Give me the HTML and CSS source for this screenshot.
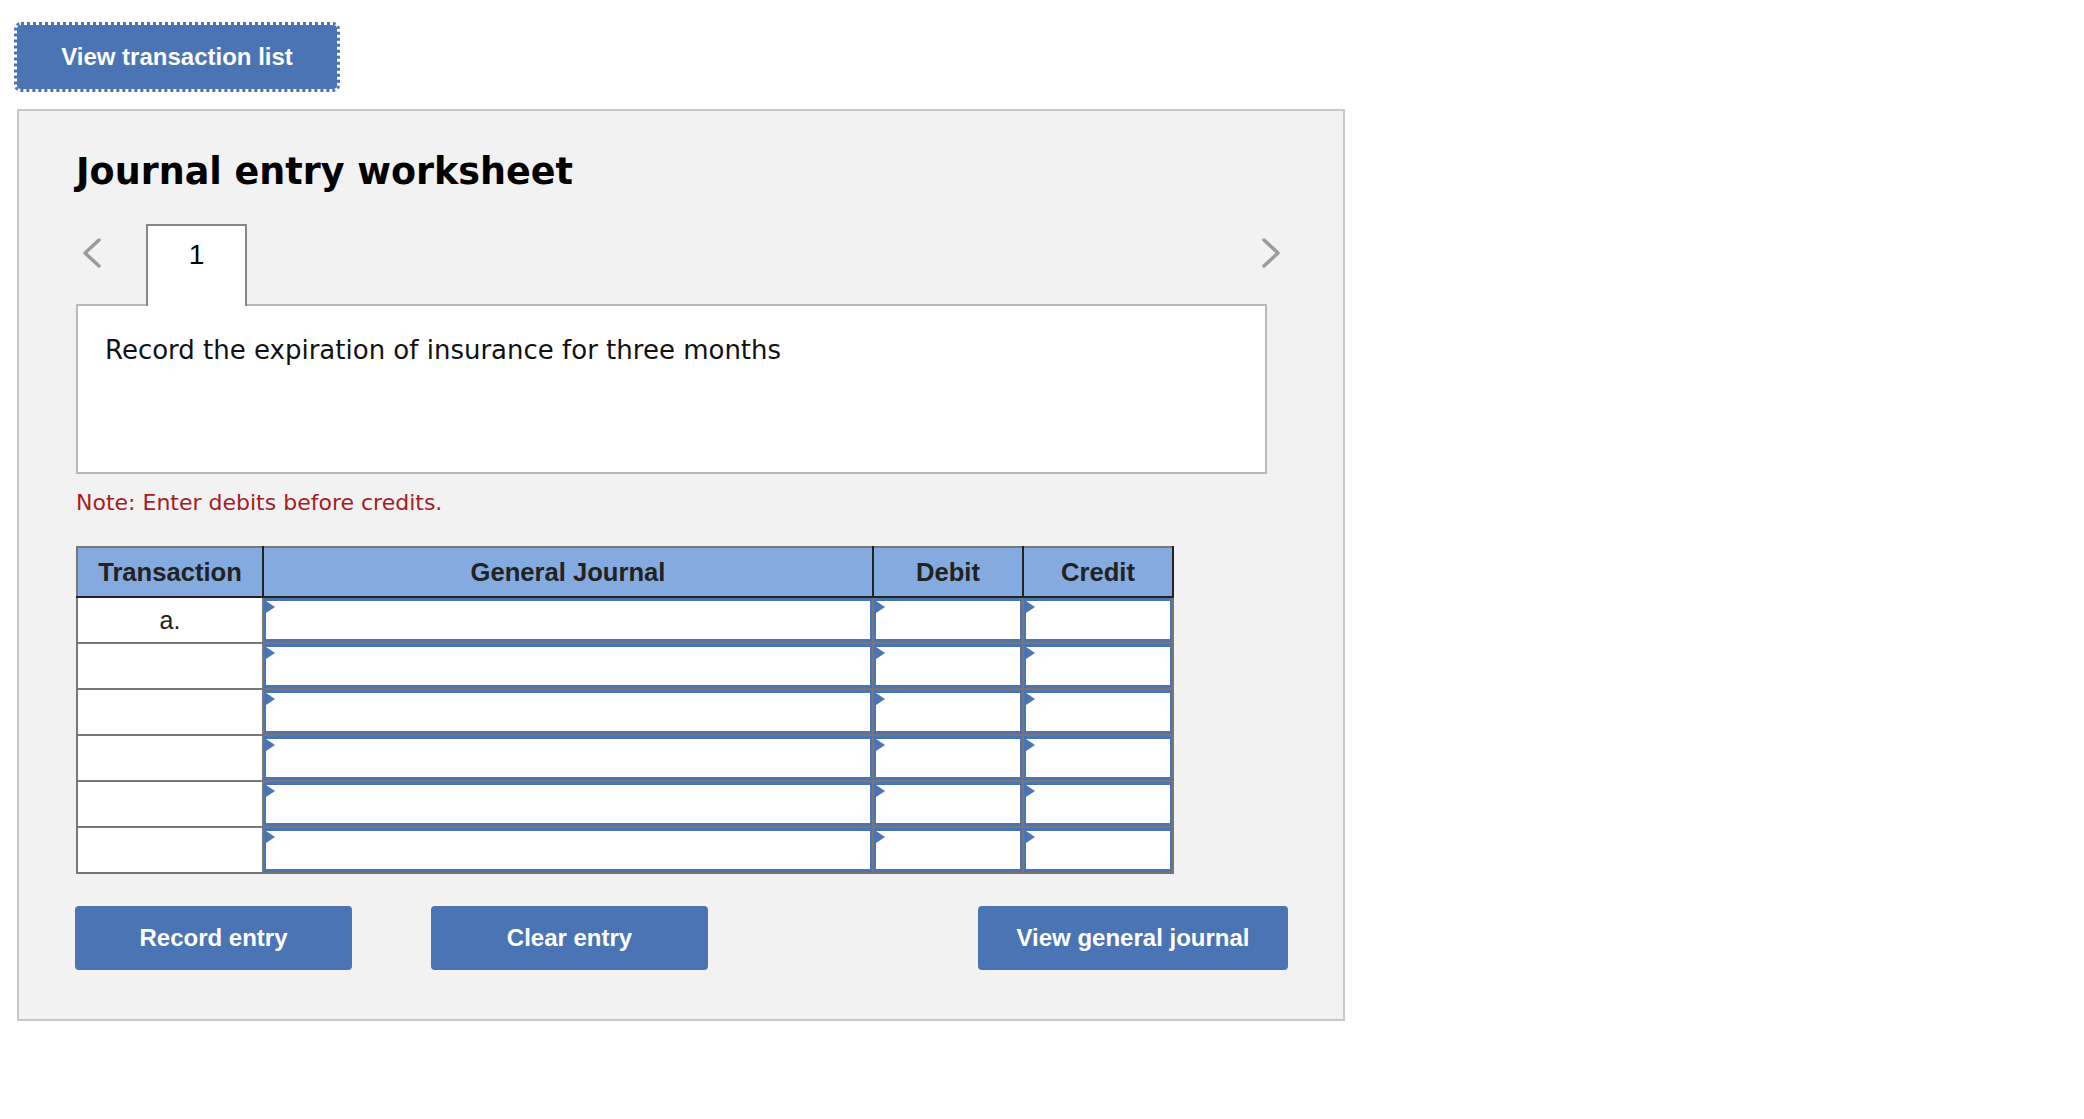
FILE: index.html
```html
<!DOCTYPE html>
<html lang="en">
<head>
    <meta charset="UTF-8">
    <meta name="viewport" content="width=device-width, initial-scale=1.0">
    <title>Journal entry worksheet</title>
    <link rel="stylesheet" href="styles.css">
</head>
<body>

<div class="page">
    <button class="btn btn-list">View transaction list</button>

    <div class="panel">
        <h1 class="title">Journal entry worksheet</h1>

        <div class="tabs">
            <span class="arrow arrow-left">
                <svg width="20" height="32" viewBox="0 0 20 32"><polyline points="17,3 3,16 17,29" /></svg>
            </span>
            <div class="tab">1</div>
            <span class="arrow arrow-right">
                <svg width="20" height="32" viewBox="0 0 20 32"><polyline points="3,3 17,16 3,29" /></svg>
            </span>
        </div>

        <div class="question">Record the expiration of insurance for three months</div>

        <p class="note">Note: Enter debits before credits.</p>

        <table class="journal">
            <colgroup>
                <col class="col-trans">
                <col class="col-account">
                <col class="col-amount">
                <col class="col-amount">
            </colgroup>
            <thead>
                <tr>
                    <th>Transaction</th>
                    <th>General Journal</th>
                    <th>Debit</th>
                    <th>Credit</th>
                </tr>
            </thead>
            <tbody>
                <tr>
                    <td class="trans">a.</td>
                    <td><div class="entry"></div></td>
                    <td><div class="entry"></div></td>
                    <td><div class="entry"></div></td>
                </tr>
                <tr>
                    <td class="trans"></td>
                    <td><div class="entry"></div></td>
                    <td><div class="entry"></div></td>
                    <td><div class="entry"></div></td>
                </tr>
                <tr>
                    <td class="trans"></td>
                    <td><div class="entry"></div></td>
                    <td><div class="entry"></div></td>
                    <td><div class="entry"></div></td>
                </tr>
                <tr>
                    <td class="trans"></td>
                    <td><div class="entry"></div></td>
                    <td><div class="entry"></div></td>
                    <td><div class="entry"></div></td>
                </tr>
                <tr>
                    <td class="trans"></td>
                    <td><div class="entry"></div></td>
                    <td><div class="entry"></div></td>
                    <td><div class="entry"></div></td>
                </tr>
                <tr>
                    <td class="trans"></td>
                    <td><div class="entry"></div></td>
                    <td><div class="entry"></div></td>
                    <td><div class="entry"></div></td>
                </tr>
            </tbody>
        </table>

        <div class="actions">
            <button class="btn btn-record">Record entry</button>
            <button class="btn btn-clear">Clear entry</button>
            <button class="btn btn-general">View general journal</button>
        </div>
    </div>
</div>

</body>
</html>
```

FILE: styles.css
```css
/* Journal worksheet */
body {
    margin: 0;
    background-color: #fff;
    font-family: "DejaVu Sans", Verdana, sans-serif;
    color: #000;
}
.page {
    padding: 25px 0 0 17px;
}
.btn {
    display: block;
    height: 64px;
    padding: 0;
    background-color: #4a74b3;
    color: #fff;
    border: none;
    border-radius: 4px;
    font-family: "Liberation Sans", Arial, sans-serif;
    font-size: 24px;
    font-weight: bold;
    cursor: pointer;
}
.btn-list {
    width: 320px;
    outline: 3px dotted #4a74b3;
}
.panel {
    box-sizing: border-box;
    width: 1328px;
    margin-top: 20px;
    padding: 40px 0 49px 57px;
    background-color: #f2f2f2;
    border: 2px solid #c8c8c8;
}
.title {
    margin: 0;
    font-size: 36.5px;
    line-height: 42px;
    font-weight: bold;
}
.tabs {
    display: flex;
    align-items: flex-start;
    width: 1205px;
    margin-top: 31px;
}
.arrow {
    display: block;
    margin-top: 13px;
}
.arrow svg {
    display: block;
}
.arrow polyline {
    fill: none;
    stroke: #9b9b9b;
    stroke-width: 3.5;
    stroke-linecap: round;
    stroke-linejoin: round;
}
.arrow-left {
    margin-left: 6px;
}
.arrow-right {
    margin-left: auto;
}
.tab {
    position: relative;
    z-index: 1;
    box-sizing: border-box;
    width: 101px;
    height: 82px;
    margin: 0 0 -2px 44px;
    padding-top: 13px;
    background-color: #fff;
    border: 2px solid #868686;
    border-bottom: none;
    text-align: center;
    font-family: "Liberation Sans", Arial, sans-serif;
    font-size: 28px;
    line-height: 32px;
}
.question {
    box-sizing: border-box;
    width: 1191px;
    height: 170px;
    padding: 29px 27px 0;
    background-color: #fff;
    border: 2px solid #b9b9b9;
    font-size: 26px;
    line-height: 30px;
    color: #111;
}
.note {
    margin: 16px 0 0;
    font-size: 22px;
    line-height: 26px;
    color: #a3201e;
}
.journal {
    margin-top: 30px;
    border-collapse: collapse;
    table-layout: fixed;
    width: 1096px;
    border: 2px solid #777;
    font-family: "Liberation Sans", Arial, sans-serif;
    color: #222;
}
.col-trans {
    width: 186px;
}
.col-account {
    width: 610px;
}
.col-amount {
    width: 150px;
}
.journal th {
    height: 48px;
    padding: 0;
    background-color: #84aadf;
    border: 2px solid #222;
    border-top-color: #777;
    font-size: 25.6px;
    font-weight: bold;
}
.journal th:first-child {
    border-left-color: #777;
}
.journal td {
    height: 44px;
    padding: 0;
    background-color: #fff;
    border: 2px solid #777;
}
.journal td.trans {
    text-align: center;
    font-size: 25px;
}
.entry {
    position: relative;
    box-sizing: border-box;
    height: 44px;
    border-style: solid;
    border-color: #4a74b3;
    border-width: 3px 2px 3px 2px;
}
.entry::before {
    content: "";
    position: absolute;
    left: 0;
    top: 0;
    border-left: 9px solid #4a74b3;
    border-top: 6px solid transparent;
    border-bottom: 6px solid transparent;
}
.actions {
    display: flex;
    margin-top: 32px;
    margin-left: -1px;
}
.btn-record,
.btn-clear {
    width: 277px;
}
.btn-clear {
    margin-left: 79px;
}
.btn-general {
    width: 310px;
    margin-left: 270px;
}
```
